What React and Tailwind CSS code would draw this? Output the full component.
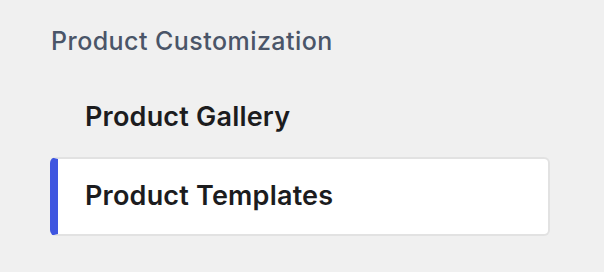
import React from 'react';

const items = [
    { label: 'Product Gallery', active: false },
    { label: 'Product Templates', active: true },
];

const App = () => {
    return (
        <div className="min-h-screen bg-[#f0f0f0] pt-[26px] pl-[50px] pr-[54px]" style={{ fontFamily: 'Inter, "Noto Sans", sans-serif' }}>
            <h2 className="text-[25px] font-medium text-[#4a5568] leading-[30px] pl-[1px] tracking-[0.45px]">
                Product Customization
            </h2>
            <div className="mt-[22px] flex flex-col">
                {items.map((item) => (
                    <div
                        key={item.label}
                        className={`h-[79px] flex items-center rounded-[6px] text-[27px] font-semibold text-[#1c1c1e] tracking-[0.2px] ${
                            item.active
                                ? 'bg-white border-2 border-[#e2e2e2] border-l-[8px] border-l-[#3f56e0] pl-[27px]'
                                : 'pl-[35px]'
                        }`}
                    >
                        {item.label}
                    </div>
                ))}
            </div>
        </div>
    );
};

export default App;
